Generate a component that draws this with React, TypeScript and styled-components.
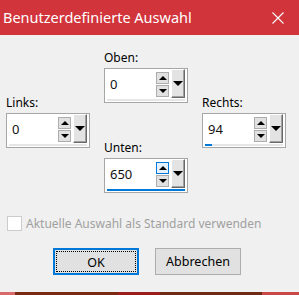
import React from "react";
import styled, { createGlobalStyle } from "styled-components";

const GlobalStyle = createGlobalStyle`
  html, body {
    margin: 0;
    padding: 0;
    background: #f0f0f0;
  }
  body {
    font-family: "Noto Sans", "Open Sans", sans-serif;
    overflow: hidden;
  }
`;

const fields = {
  links: { value: "0", fill: 0 },
  oben: { value: "0", fill: 0 },
  rechts: { value: "94", fill: 9 },
  unten: { value: "650", fill: 100 },
};

const Dialog = () => {
  return (
    <Window>
      <GlobalStyle />
      <TitleBar>
        <Title>Benutzerdefinierte Auswahl</Title>
        <svg width="12" height="12" viewBox="0 0 12 12">
          <path d="M0.5 0.5 L11.5 11.5 M11.5 0.5 L0.5 11.5" stroke="#fff" strokeWidth="1.1" />
        </svg>
      </TitleBar>
      <Body>
        <Fields>
          <Column $offset={45}>
            <Spin label="Links:" {...fields.links} />
          </Column>
          <Column>
            <Spin label="Oben:" {...fields.oben} />
            <Group $gap={37}>
              <Spin label="Unten:" {...fields.unten} upActive />
            </Group>
          </Column>
          <Column $offset={45}>
            <Spin label="Rechts:" {...fields.rechts} />
          </Column>
        </Fields>
        <CheckRow>
          <CheckBox />
          <CheckLabel>Aktuelle Auswahl als Standard verwenden</CheckLabel>
        </CheckRow>
        <Buttons>
          <Button $primary>
            <Focus>OK</Focus>
          </Button>
          <Button>Abbrechen</Button>
        </Buttons>
      </Body>
      <Strip />
    </Window>
  );
};

const Spin = ({ label, value, fill, upActive }: { label: string; value: string; fill: number; upActive?: boolean }) => (
  <>
    <Label>{label}</Label>
    <SpinBox>
      <SpinRow>
        <Value>{value}</Value>
        <Arrows>
          <ArrowButton $active={upActive}>
            <Tri $up />
          </ArrowButton>
          <ArrowButton>
            <Tri />
          </ArrowButton>
        </Arrows>
        <DropButton>
          <BigTri />
        </DropButton>
      </SpinRow>
      <Track>
        <Fill style={{ width: `${fill}%` }} />
      </Track>
    </SpinBox>
  </>
);

export default Dialog;

const Window = styled.div`
  width: 299px;
  height: 295px;
  display: flex;
  flex-direction: column;
  background: #f0f0f0;
`;

const TitleBar = styled.div`
  height: 35px;
  flex-shrink: 0;
  background: #d1343a;
  display: flex;
  align-items: center;
  justify-content: space-between;
  padding: 0 15px 0 3px;
`;

const Title = styled.span`
  color: #fff;
  font-size: 14.5px;
  padding-bottom: 1px;
`;

const Body = styled.div`
  flex: 1;
  display: flex;
  flex-direction: column;
  padding: 15px 0 0 6px;
`;

const Fields = styled.div`
  display: flex;
  gap: 14px;
`;

const Column = styled.div<{ $offset?: number }>`
  width: 84px;
  display: flex;
  flex-direction: column;
  padding-top: ${(p) => p.$offset ?? 0}px;
`;

const Group = styled.div<{ $gap: number }>`
  display: flex;
  flex-direction: column;
  margin-top: ${(p) => p.$gap}px;
`;

const Label = styled.div`
  font-size: 12px;
  line-height: 15px;
  margin-bottom: 3px;
  color: #000;
`;

const SpinBox = styled.div`
  height: 35px;
  box-sizing: border-box;
  border: 1px solid #a6a6a6;
  background: #fff;
  display: flex;
  flex-direction: column;
  padding: 0 2px 1px 1px;
`;

const SpinRow = styled.div`
  height: 29px;
  display: flex;
`;

const Value = styled.div`
  flex: 1;
  display: flex;
  align-items: center;
  padding: 1px 0 0 4px;
  font-size: 13px;
  color: #111;
`;

const Arrows = styled.div`
  width: 13px;
  display: flex;
  flex-direction: column;
  gap: 1px;
  padding: 3px 0 1px;
  margin-right: 2px;
`;

const ArrowButton = styled.div<{ $active?: boolean }>`
  flex: 1;
  box-sizing: border-box;
  border: 1px solid ${(p) => (p.$active ? "#0078d7" : "#adadad")};
  background: ${(p) => (p.$active ? "#e5f1fb" : "#e1e1e1")};
  display: flex;
  align-items: center;
  justify-content: center;
`;

const Tri = styled.div<{ $up?: boolean }>`
  width: 0;
  height: 0;
  border-left: 4px solid transparent;
  border-right: 4px solid transparent;
  ${(p) => (p.$up ? "border-bottom: 4px solid #000;" : "border-top: 4px solid #000;")}
`;

const DropButton = styled.div`
  width: 14px;
  box-sizing: border-box;
  background: #e3e3e3;
  border-top: 1px solid #fff;
  border-left: 1px solid #fff;
  border-right: 1px solid #696969;
  border-bottom: 1px solid #696969;
  box-shadow: inset -1px -1px 0 #a0a0a0;
  display: flex;
  justify-content: center;
  padding-top: 11px;
`;

const BigTri = styled.div`
  width: 0;
  height: 0;
  border-left: 5px solid transparent;
  border-right: 5px solid transparent;
  border-top: 5px solid #000;
  margin-right: 1px;
`;

const Track = styled.div`
  height: 2px;
  margin: 1px 0 0 1px;
  background: #e6e6e6;
`;

const Fill = styled.div`
  height: 100%;
  background: #0078d7;
`;

const CheckRow = styled.div`
  display: flex;
  align-items: center;
  gap: 4px;
  margin: 22px 0 0 1px;
`;

const CheckBox = styled.div`
  width: 15px;
  height: 15px;
  box-sizing: border-box;
  border: 1px solid #cccccc;
  background: #fff;
`;

const CheckLabel = styled.span`
  font-size: 12px;
  color: #a0a0a0;
`;

const Buttons = styled.div`
  display: flex;
  gap: 16px;
  padding-left: 47px;
  margin-top: 16px;
`;

const Button = styled.div<{ $primary?: boolean }>`
  width: 86px;
  height: 27px;
  box-sizing: border-box;
  border: ${(p) => (p.$primary ? "2px solid #0078d7" : "1px solid #adadad")};
  background: #e1e1e1;
  display: flex;
  align-items: stretch;
  justify-content: center;
  font-size: 12.5px;
  color: #000;
  padding: ${(p) => (p.$primary ? "1px" : "0")};
  line-height: 25px;
  text-align: center;
`;

const Focus = styled.div`
  flex: 1;
  border: 1px dotted #000;
  line-height: 21px;
`;

const Strip = styled.div`
  height: 3px;
  flex-shrink: 0;
  background: linear-gradient(
    to right,
    #d86a6a 0 15px,
    #7a2a12 15px 118px,
    #9a1c1c 118px 160px,
    #6e2a14 160px 262px,
    #c84848 262px
  );
`;
